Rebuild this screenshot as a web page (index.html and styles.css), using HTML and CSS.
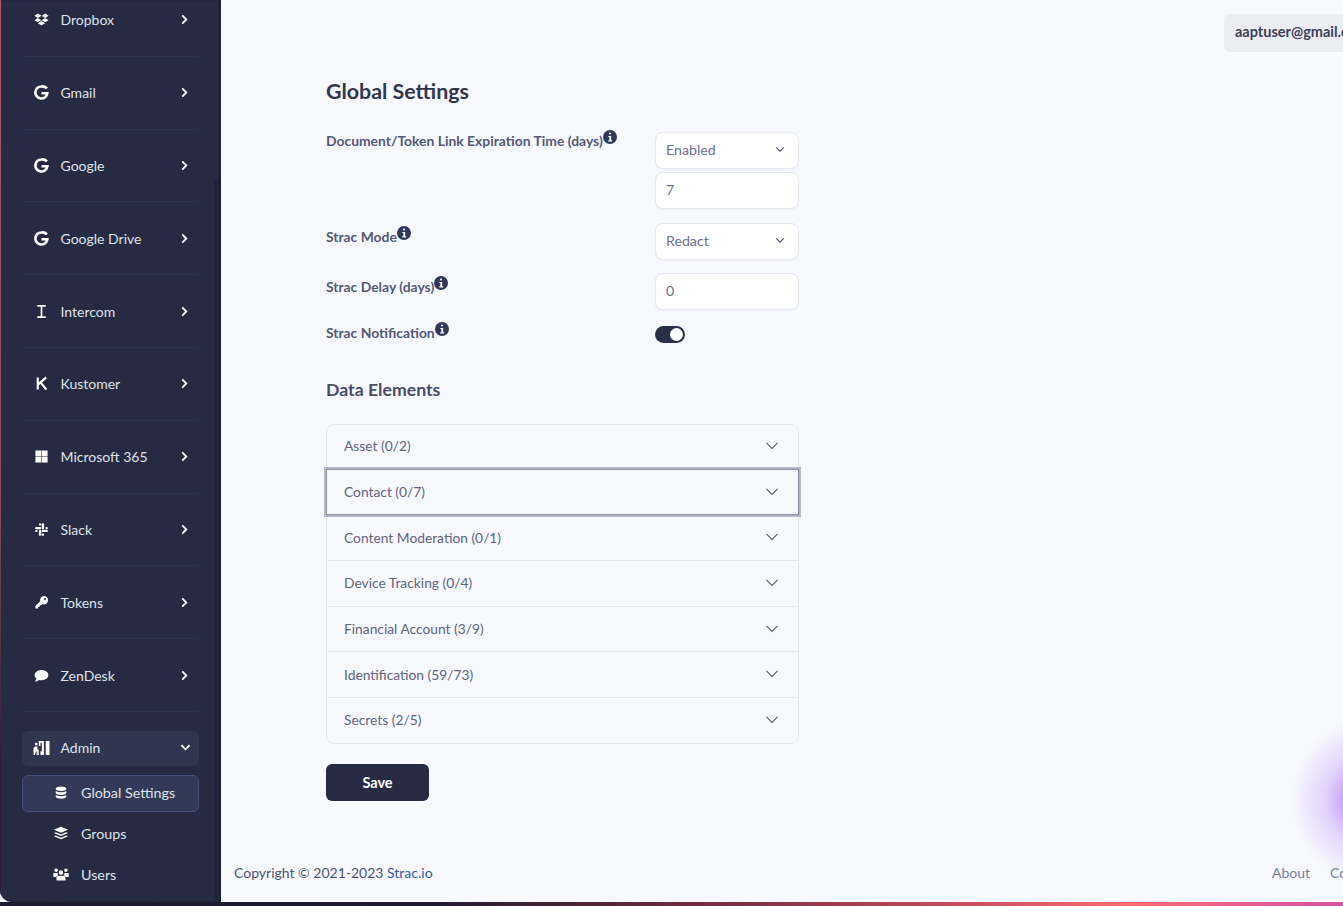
FILE: index.html
```html
<!DOCTYPE html>
<html lang="en">
<head>
<meta charset="utf-8">
<title>Global Settings</title>
<link rel="stylesheet" href="styles.css">
</head>
<body>
<div class="frame">
  <aside class="sidebar">
    <div class="scroll-thumb"></div>
    <nav class="nav">
      <a class="item"><span class="ic"><svg viewBox="0 0 16 16" width="15" height="15"><path d="M4 1.500 0.500 4 4 6.300 0.500 8.700 4 11l4-2.500L12 11l3.500-2.300L12 6.300 15.500 4 12 1.500 8 4zM8 4l4 2.300L8 8.700 4 6.300zM4.200 11.900 8 14.300l3.800-2.400L8 9.500z"/></svg></span><span class="lbl">Dropbox</span><svg class="chev" viewBox="0 0 10 12" width="9" height="11"><path d="M2.500 1.500 7 6l-4.500 4.500"/></svg></a>
      <a class="item"><span class="ic"><svg viewBox="0 0 16 16" width="15" height="15"><path class="g" d="M13.800 3.700A6.700 6.700 0 0 0 8 1.600a6.400 6.400 0 1 0 6.200 7.200H8"/></svg></span><span class="lbl">Gmail</span><svg class="chev" viewBox="0 0 10 12" width="9" height="11"><path d="M2.500 1.500 7 6l-4.500 4.500"/></svg></a>
      <a class="item"><span class="ic"><svg viewBox="0 0 16 16" width="15" height="15"><path class="g" d="M13.800 3.700A6.700 6.700 0 0 0 8 1.600a6.400 6.400 0 1 0 6.200 7.200H8"/></svg></span><span class="lbl">Google</span><svg class="chev" viewBox="0 0 10 12" width="9" height="11"><path d="M2.500 1.500 7 6l-4.500 4.500"/></svg></a>
      <a class="item"><span class="ic"><svg viewBox="0 0 16 16" width="15" height="15"><path class="g" d="M13.800 3.700A6.700 6.700 0 0 0 8 1.600a6.400 6.400 0 1 0 6.200 7.200H8"/></svg></span><span class="lbl">Google Drive</span><svg class="chev" viewBox="0 0 10 12" width="9" height="11"><path d="M2.500 1.500 7 6l-4.500 4.500"/></svg></a>
      <a class="item"><span class="ic"><svg viewBox="0 0 16 16" width="15" height="15"><path class="i" d="M3.500 2h9M3.500 14h9M8 2v12"/></svg></span><span class="lbl">Intercom</span><svg class="chev" viewBox="0 0 10 12" width="9" height="11"><path d="M2.500 1.500 7 6l-4.500 4.500"/></svg></a>
      <a class="item"><span class="ic"><svg viewBox="0 0 16 16" width="15" height="15"><path class="k" d="M4 1.500v13M13 1.500 4 9.500M7.200 7l6 7.500"/></svg></span><span class="lbl">Kustomer</span><svg class="chev" viewBox="0 0 10 12" width="9" height="11"><path d="M2.500 1.500 7 6l-4.500 4.500"/></svg></a>
      <a class="item"><span class="ic"><svg viewBox="0 0 16 16" width="15" height="15"><path d="M1.500 1.500h6.200v6.200H1.500zM8.300 1.500h6.200v6.200H8.300zM1.500 8.300h6.200v6.200H1.500zM8.300 8.300h6.200v6.200H8.300z"/></svg></span><span class="lbl">Microsoft 365</span><svg class="chev" viewBox="0 0 10 12" width="9" height="11"><path d="M2.500 1.500 7 6l-4.500 4.500"/></svg></a>
      <a class="item"><span class="ic"><svg viewBox="0 0 16 16" width="15" height="15"><path class="s" d="M2.500 6.500h4M6.500 2.500v.1M9.500 2.500v4M13.500 6.500h-.1M13.500 9.500h-4M9.500 13.500v-.1M6.500 13.500v-4M2.500 9.500h.1"/></svg></span><span class="lbl">Slack</span><svg class="chev" viewBox="0 0 10 12" width="9" height="11"><path d="M2.500 1.500 7 6l-4.500 4.500"/></svg></a>
      <a class="item"><span class="ic"><svg viewBox="0 0 16 16" width="15" height="15"><path fill-rule="evenodd" d="M10.500 1a4.500 4.500 0 0 1 0 9c-.6 0-1.100-.1-1.600-.3L7.700 11H6v1.700H4.300v1.800H1.500v-2.800l5.100-5.100A4.500 4.500 0 0 1 10.500 1zm1.200 2.200a1.100 1.100 0 1 0 0 2.200 1.100 1.100 0 0 0 0-2.200z"/></svg></span><span class="lbl">Tokens</span><svg class="chev" viewBox="0 0 10 12" width="9" height="11"><path d="M2.500 1.500 7 6l-4.500 4.500"/></svg></a>
      <a class="item"><span class="ic"><svg viewBox="0 0 16 16" width="15" height="15"><path d="M8 2c4 0 7.300 2.400 7.300 5.500S12 13 8 13c-.9 0-1.700-.1-2.500-.3C4.500 13.600 2.900 14.300 1 14.300c.8-.8 1.400-1.900 1.600-3C1.400 10.300.7 9 .7 7.500.7 4.400 4 2 8 2z"/></svg></span><span class="lbl">ZenDesk</span><svg class="chev" viewBox="0 0 10 12" width="9" height="11"><path d="M2.500 1.500 7 6l-4.500 4.500"/></svg></a>
    </nav>
    <a class="admin"><span class="ic"><svg viewBox="0 0 16 15" width="17" height="16"><path fill-rule="evenodd" d="M.5 7.500 2 6h2.200v2.800h1.200V14H4v-3.200h-.8V14H2.800v-3.500L1.800 14H.5zM1.800 3.800a1.300 1.300 0 1 1 2.600 0 1.300 1.300 0 0 1-2.600 0zM5.500 1h4.800v13H7v-3.500h1.300V2.500H7v3H5.500zM12 1h3.500v13H12z"/></svg></span><span class="lbl">Admin</span><svg class="chev down" viewBox="0 0 12 10" width="11" height="9"><path d="M1.500 2.500 6 7l4.500-4.500"/></svg></a>
    <div class="sub">
      <a class="subitem active"><span class="ic"><svg viewBox="0 0 16 16" width="14" height="15"><path d="M2 3.200C2 1.900 4.700 1 8 1s6 .9 6 2.200v.9C14 5.400 11.300 6.300 8 6.300S2 5.400 2 4.100zM2 6.200c1.200.9 3.600 1.400 6 1.400s4.800-.5 6-1.400v2.500c0 1.200-2.700 2.100-6 2.100s-6-.9-6-2.100zM2 10.900c1.200.9 3.600 1.300 6 1.300s4.800-.4 6-1.300v2c0 1.200-2.700 2.100-6 2.100s-6-.9-6-2.100z"/></svg></span><span>Global Settings</span></a>
      <a class="subitem"><span class="ic"><svg viewBox="0 0 16 16" width="16" height="15"><path d="M8 .8 15.500 4 8 7.200.5 4zM2.400 6.600 8 9l5.600-2.400 1.900.9L8 10.700.5 7.500zM2.400 10.100 8 12.500l5.600-2.400 1.900.9L8 14.200.5 11z"/></svg></span><span>Groups</span></a>
      <a class="subitem"><span class="ic"><svg viewBox="0 0 18 16" width="18" height="15"><path d="M3.800 1.500a1.900 1.900 0 1 1 0 3.800 1.900 1.900 0 0 1 0-3.800zM14.200 1.500a1.900 1.900 0 1 1 0 3.800 1.900 1.900 0 0 1 0-3.800zM9 3.500a2.400 2.400 0 1 1 0 4.800 2.400 2.400 0 0 1 0-4.800zM.8 6.300h4.800c-.4.700-.2 1.600.4 2.400-1 .4-1.800 1-2.300 1.900H.8zM12.400 6.300h4.800v4.300h-2.900c-.5-.9-1.300-1.500-2.300-1.900.6-.8.800-1.700.4-2.400zM6.300 9.300h5.400c1.200 0 2.100 1 2.100 2.200v3H4.200v-3c0-1.200.9-2.200 2.100-2.200z"/></svg></span><span>Users</span></a>
    </div>
  </aside>
  <main class="main">
    <div class="topbar"><div class="user">aaptuser@gmail.com</div></div>
    <div class="glow"></div>
    <section class="content">
      <h1 class="title">Global Settings</h1>
      <div class="form">
        <div class="row r1">
          <div class="label">Document/Token Link Expiration Time (days)<svg class="info" viewBox="0 0 14 14" width="14" height="14"><circle cx="7" cy="7" r="7"/><rect x="6" y="2.600" width="2" height="2" rx=".8"/><path d="M5.300 6h2.900v4.300h1v1.100H5.200v-1.100h1.100V7.100h-1z"/></svg></div>
          <div class="controls">
            <div class="field select"><span>Enabled</span><svg viewBox="0 0 12 8" width="10" height="7"><path d="M1.500 1.500 6 6l4.500-4.500"/></svg></div>
            <div class="field"><span>7</span></div>
          </div>
        </div>
        <div class="row r2">
          <div class="label">Strac Mode<svg class="info" viewBox="0 0 14 14" width="14" height="14"><circle cx="7" cy="7" r="7"/><rect x="6" y="2.600" width="2" height="2" rx=".8"/><path d="M5.300 6h2.900v4.300h1v1.100H5.200v-1.100h1.100V7.100h-1z"/></svg></div>
          <div class="controls"><div class="field select"><span>Redact</span><svg viewBox="0 0 12 8" width="10" height="7"><path d="M1.500 1.500 6 6l4.500-4.500"/></svg></div></div>
        </div>
        <div class="row r3">
          <div class="label">Strac Delay (days)<svg class="info" viewBox="0 0 14 14" width="14" height="14"><circle cx="7" cy="7" r="7"/><rect x="6" y="2.600" width="2" height="2" rx=".8"/><path d="M5.300 6h2.900v4.300h1v1.100H5.200v-1.100h1.100V7.100h-1z"/></svg></div>
          <div class="controls"><div class="field"><span>0</span></div></div>
        </div>
        <div class="row r4">
          <div class="label">Strac Notification<svg class="info" viewBox="0 0 14 14" width="14" height="14"><circle cx="7" cy="7" r="7"/><rect x="6" y="2.600" width="2" height="2" rx=".8"/><path d="M5.300 6h2.900v4.300h1v1.100H5.200v-1.100h1.100V7.100h-1z"/></svg></div>
          <div class="controls"><div class="toggle"><div class="knob"></div></div></div>
        </div>
      </div>
      <h2 class="subtitle">Data Elements</h2>
      <div class="accordion">
        <div class="acc"><span>Asset (0/2)</span><svg viewBox="0 0 16 10" width="14" height="8"><path d="M1 1l7 7 7-7"/></svg></div>
        <div class="acc focus"><span>Contact (0/7)</span><svg viewBox="0 0 16 10" width="14" height="8"><path d="M1 1l7 7 7-7"/></svg></div>
        <div class="acc"><span>Content Moderation (0/1)</span><svg viewBox="0 0 16 10" width="14" height="8"><path d="M1 1l7 7 7-7"/></svg></div>
        <div class="acc"><span>Device Tracking (0/4)</span><svg viewBox="0 0 16 10" width="14" height="8"><path d="M1 1l7 7 7-7"/></svg></div>
        <div class="acc"><span>Financial Account (3/9)</span><svg viewBox="0 0 16 10" width="14" height="8"><path d="M1 1l7 7 7-7"/></svg></div>
        <div class="acc"><span>Identification (59/73)</span><svg viewBox="0 0 16 10" width="14" height="8"><path d="M1 1l7 7 7-7"/></svg></div>
        <div class="acc"><span>Secrets (2/5)</span><svg viewBox="0 0 16 10" width="14" height="8"><path d="M1 1l7 7 7-7"/></svg></div>
      </div>
      <button class="save">Save</button>
    </section>
    <footer class="footer">
      <div>Copyright © 2021-2023 <a class="brand">Strac.io</a></div>
      <div class="links"><a>About</a><a>Contact</a></div>
    </footer>
  </main>
</div>
<div class="strip"></div>
</body>
</html>
```

FILE: styles.css
```css
* { box-sizing: border-box; }
html, body { margin: 0; height: 906px; overflow: hidden; background: #1b1c30; }
body { font-family: "Lato", "Noto Sans", sans-serif; font-size: 14px; color: #4a4e69; }
.frame { display: flex; height: 902px; width: 1343px; overflow: hidden; background: #f7f9fe; }
.sidebar { position: relative; flex: 0 0 221px; height: 902px; background: #262b43; border-bottom-left-radius: 12px; box-shadow: inset -2px 0 2px rgba(20,22,40,.6); padding: 0 22px 0 22px; overflow: hidden; color: #dfe2ec; }
.sidebar::before { content: ""; position: absolute; left: 0; top: 0; bottom: 0; width: 1px; background: linear-gradient(180deg, #b0566f 0%, #93475f 55%, #2a1d38 85%); }
.scroll-thumb { position: absolute; right: 2px; top: 180px; bottom: 0; width: 5px; background: #20243a; }
.nav { display: flex; flex-direction: column; margin-top: -16px; }
.item { display: flex; align-items: center; height: 72.800px; padding-left: 10px; padding-right: 10px; border-bottom: 1px solid #2d324c; }
.ic { flex: 0 0 18px; display: flex; justify-content: center; }
.ic svg { fill: #fff; display: block; }
.ic .g { fill: none; stroke: #fff; stroke-width: 2.800; }
.ic .i { fill: none; stroke: #fff; stroke-width: 1.800; }
.ic .k { fill: none; stroke: #fff; stroke-width: 2.300; }
.ic .s { fill: none; stroke: #fff; stroke-width: 2.500; stroke-linecap: round; }
.lbl { margin-left: 10.500px; flex: 1; }
.chev { fill: none; stroke: #fff; stroke-width: 2; }
.admin { display: flex; align-items: center; height: 35px; margin-top: 19px; padding: 0 8px 1px 10px; background: #30364f; border-radius: 6px; }
.sub { display: flex; flex-direction: column; margin-top: 9px; gap: 4.400px; font-size: 14.300px; }
.subitem { display: flex; align-items: center; height: 36px; padding: 0 0 1px 29px; gap: 11px; border: 1px solid transparent; border-radius: 6px; }
.subitem.active { height: 37px; background: #323a58; border-color: #43507a; }
.main { position: relative; flex: 1; display: flex; flex-direction: column; min-width: 0; overflow: hidden; }
.topbar { display: flex; margin-top: 14px; padding-left: 1003px; height: 38px; flex: none; }
.user { flex: none; width: 200px; height: 38px; line-height: 36px; padding-left: 11px; background: #ecedf3; border-radius: 6px 0 0 6px; font-size: 14.500px; font-weight: 700; color: #3d4157; white-space: nowrap; overflow: hidden; }
.glow { position: absolute; right: -110px; top: 710px; width: 170px; height: 180px; border-radius: 50%; background: radial-gradient(closest-side, #cba9f8 0%, #cba9f8 30%, #e3d2fb 50%, rgba(247,249,254,0) 90%); }
.content { position: relative; width: 473px; margin-left: 105px; margin-top: 25px; }
.title { margin: 0; font-size: 21.400px; line-height: 28px; font-weight: 700; color: #32364c; }
.form { margin-top: 27px; }
.row { display: flex; justify-content: space-between; }
.r2 { margin-top: 14px; }
.r3 { margin-top: 13px; }
.r4 { margin-top: 14px; }
.label { font-weight: 700; font-size: 13.900px; color: #555976; display: flex; align-items: flex-start; white-space: nowrap; line-height: 20px; margin-top: -1px; }
.r2 .label, .r3 .label { margin-top: 4px; }
.info { fill: #33385a; margin-top: -1px; }
.info rect, .info path { fill: #f7f9fe; }
.controls { width: 144px; display: flex; flex-direction: column; gap: 3px; }
.field { height: 37px; border: 1px solid #e5e8f1; border-radius: 8px; background: #fff; display: flex; align-items: center; justify-content: space-between; padding: 0 13px 2px 10px; font-size: 14.200px; color: #6d7192; box-shadow: 0 1px 2px rgba(60,70,110,.05); }
.field svg { fill: none; stroke: #4f5370; stroke-width: 1.500; }
.toggle { width: 30px; height: 17px; margin-top: 2px; border-radius: 9px; background: #2b3049; position: relative; }
.knob { position: absolute; right: 2px; top: 2px; width: 13px; height: 13px; border-radius: 50%; background: #fff; }
.subtitle { margin: 35px 0 0; font-size: 17.700px; line-height: 24px; font-weight: 700; color: #494d68; }
.accordion { margin-top: 22px; border: 1px solid #e6e8f1; border-radius: 8px; position: relative; font-size: 13.800px; }
.acc { display: flex; align-items: center; justify-content: space-between; height: 45.700px; padding: 0 19px 1px 17px; border-bottom: 1px solid #e6e8f1; color: #60647f; }
.acc:first-child { height: 44.700px; padding-bottom: 2.500px; }
.acc:last-child { height: 44.700px; border-bottom: 0; }
.acc svg { fill: none; stroke: #53576f; stroke-width: 1.300; }
.acc.focus { height: 46.700px; outline: 2px solid #b5b8c6; outline-offset: 0; position: relative; border: 1px solid #8a8ea3; margin: -1px -1px 0; padding: 0 19px 1px 17px; }
.save { display: block; margin-top: 20px; width: 103px; height: 37px; background: #262b43; color: #fff; border: 0; border-radius: 6px; font: 700 14.500px "Lato", sans-serif; }
.footer { position: absolute; left: 13px; right: 0; bottom: 20px; display: flex; justify-content: space-between; height: 18px; line-height: 18px; color: #4f5370; white-space: nowrap; }
.brand { color: #2f5aa8; }
.links { display: flex; gap: 20px; width: 71px; color: #7a7d9a; }
.strip { height: 4px; background: linear-gradient(90deg, #1b1c30 0%, #241a30 33%, #7e2f45 55%, #c9505f 72%, #ff6a70 84%, #d452a8 100%); }
```
